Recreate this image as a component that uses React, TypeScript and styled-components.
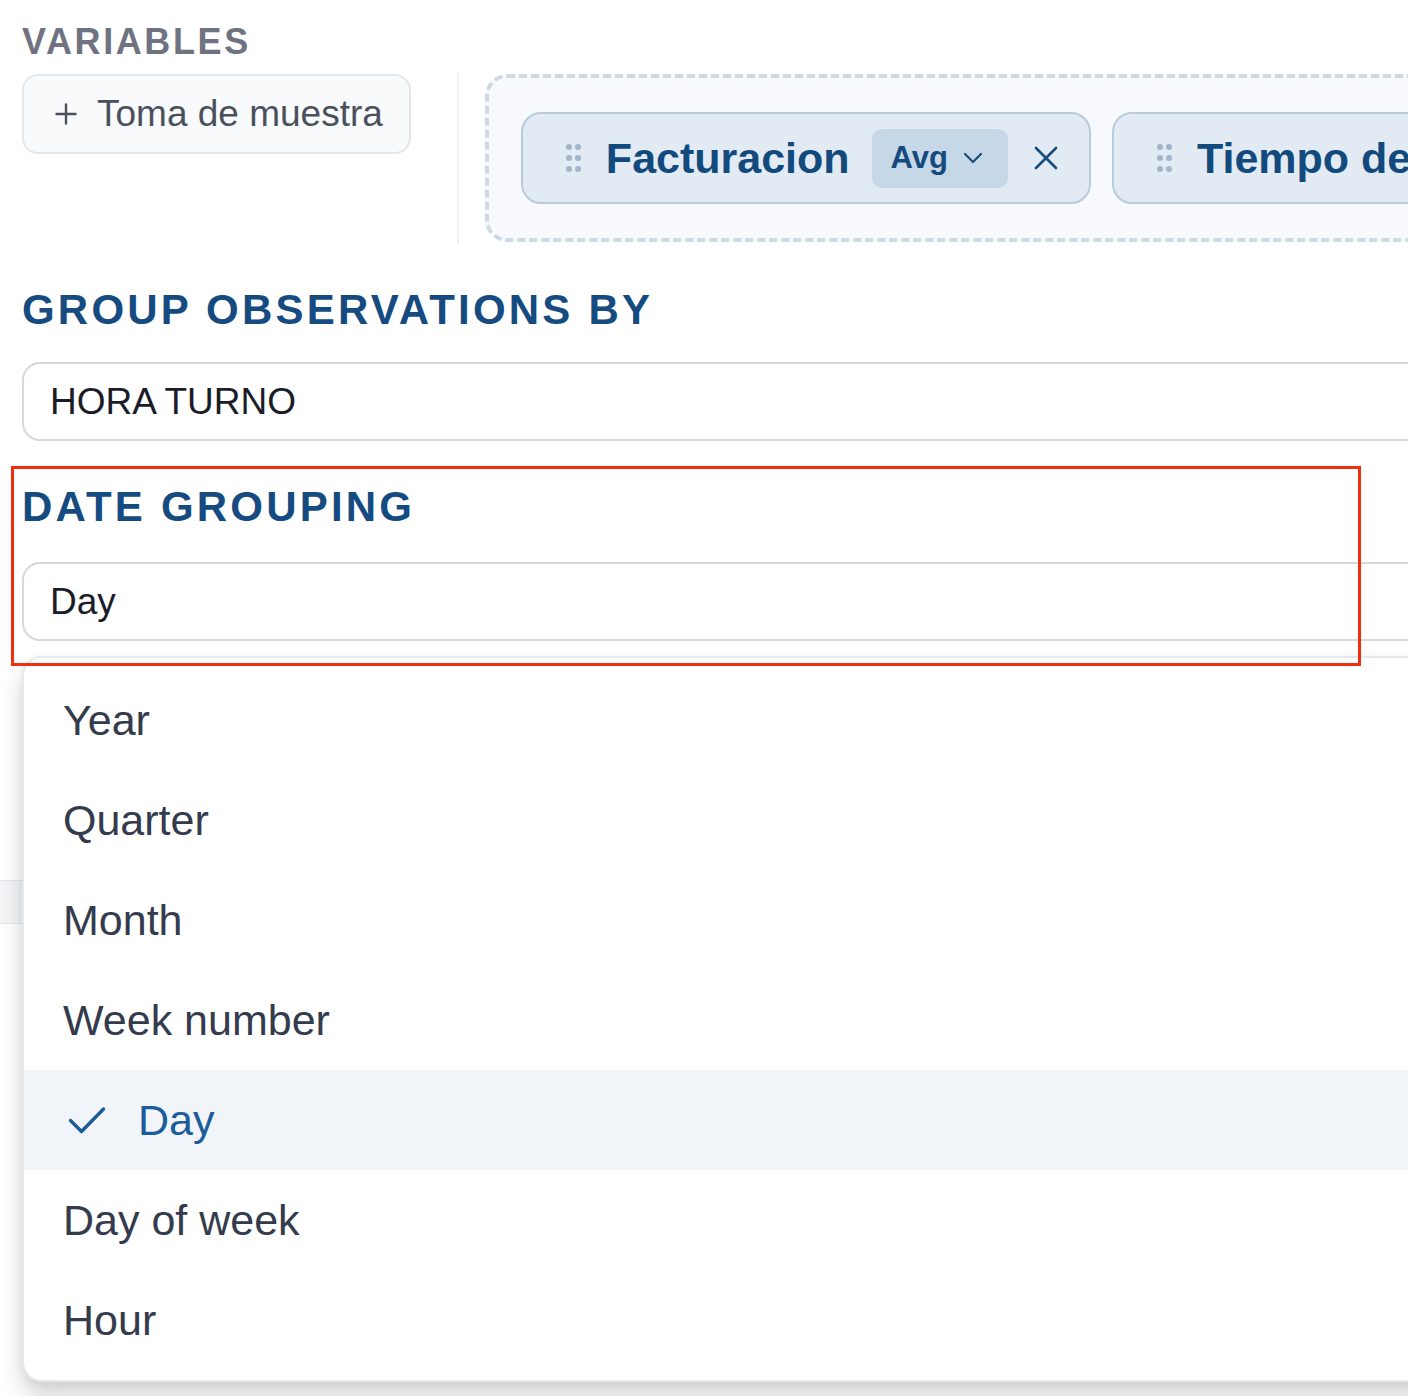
import styled, { createGlobalStyle } from 'styled-components'

const GlobalStyle = createGlobalStyle`
  html, body {
    margin: 0;
    padding: 0;
    background: #ffffff;
    overflow: hidden;
  }
  body {
    font-family: 'Liberation Sans', Arial, Helvetica, sans-serif;
    -webkit-font-smoothing: antialiased;
  }
`

const variables = [
  { id: 'fact', name: 'Facturacion', agg: 'Avg', width: 569 },
  { id: 'tiempo', name: 'Tiempo de entrega', agg: 'Avg', width: 620 },
]

const dateOptions = ['Year', 'Quarter', 'Month', 'Week number', 'Day', 'Day of week', 'Hour']

export default function App() {
  const selected = 'Day'
  return (
    <>
      <GlobalStyle />
      <Page>
        <Label>VARIABLES</Label>
        <VarRow>
          <AddButton>
            <PlusIcon />
            <span>Toma de muestra</span>
          </AddButton>
          <Divider />
          <DropZone>
            {variables.map((v) => (
              <Chip key={v.id} style={{ minWidth: v.width }}>
                <GripIcon />
                <ChipName>{v.name}</ChipName>
                <AggPill>
                  {v.agg}
                  <ChevronIcon />
                </AggPill>
                <RemoveButton>
                  <CloseIcon />
                </RemoveButton>
              </Chip>
            ))}
          </DropZone>
        </VarRow>

        <Heading $gap={42}>GROUP OBSERVATIONS BY</Heading>
        <Field $gap={28}>HORA TURNO</Field>

        <DateBlock>
          <Highlight />
          <Heading $gap={0}>DATE GROUPING</Heading>
          <SelectWrap>
            <Field $gap={31}>{selected}</Field>
            <Menu>
              {dateOptions.map((opt) => (
                <MenuItem key={opt} $active={opt === selected}>
                  {opt === selected && <CheckIcon />}
                  {opt}
                </MenuItem>
              ))}
            </Menu>
          </SelectWrap>
        </DateBlock>

        <ToolbarStrip />
      </Page>
    </>
  )
}

// iconos dibujados a mano
function PlusIcon() {
  return (
    <svg width="22" height="22" viewBox="0 0 22 22" fill="none" stroke="#4b505d" strokeWidth="2.4" strokeLinecap="round">
      <path d="M11 1.5v19M1.5 11h19" />
    </svg>
  )
}

function GripIcon() {
  const dots = []
  for (let r = 0; r < 3; r++) {
    for (let c = 0; c < 2; c++) {
      dots.push(<circle key={`${r}-${c}`} cx={3 + c * 9} cy={3 + r * 11} r="3" />)
    }
  }
  return (
    <svg width="15" height="28" viewBox="0 0 15 28" fill="#a3b5c8">
      {dots}
    </svg>
  )
}

function ChevronIcon() {
  return (
    <svg width="20" height="12" viewBox="0 0 20 12" fill="none" stroke="#174c7e" strokeWidth="2.2" strokeLinecap="round" strokeLinejoin="round">
      <path d="M2 2l8 8 8-8" />
    </svg>
  )
}

function CloseIcon() {
  return (
    <svg width="24" height="24" viewBox="0 0 24 24" fill="none" stroke="#174c7e" strokeWidth="2.6" strokeLinecap="round">
      <path d="M2 2l20 20M22 2L2 22" />
    </svg>
  )
}

function CheckIcon() {
  return (
    <CheckWrap>
      <svg width="38" height="28" viewBox="0 0 38 28" fill="none" stroke="#1c5a98" strokeWidth="3.4" strokeLinecap="round" strokeLinejoin="round">
        <path d="M2.5 14.5l11 11L35.5 3" />
      </svg>
    </CheckWrap>
  )
}

const Page = styled.div`
  position: relative;
  width: 1408px;
  height: 1396px;
  box-sizing: border-box;
  padding: 22px 0 0 22px;
  overflow: hidden;
`

const Label = styled.div`
  font-size: 36px;
  line-height: 40px;
  font-weight: 700;
  letter-spacing: 2.6px;
  color: #6f7280;
`

const VarRow = styled.div`
  display: flex;
  align-items: flex-start;
  margin-top: 12px;
  height: 170px;
`

const AddButton = styled.button`
  display: flex;
  align-items: center;
  gap: 20px;
  box-sizing: border-box;
  height: 80px;
  padding: 0 26px 0 31px;
  border: 2px solid #e4e6ea;
  border-radius: 16px;
  background: #f9fafb;
  font-family: inherit;
  font-size: 37px;
  color: #4b505d;
  white-space: nowrap;
`

const Divider = styled.div`
  flex: none;
  width: 2px;
  height: 172px;
  margin: -2px 26px 0 46px;
  background: #eef0f3;
`

const DropZone = styled.div`
  display: flex;
  align-items: center;
  gap: 21px;
  box-sizing: border-box;
  height: 168px;
  min-width: 1100px;
  padding: 0 32px;
  border: 4px dashed #cfd9e4;
  border-radius: 22px;
  background: #f7f9fc;
`

const Chip = styled.div`
  display: flex;
  align-items: center;
  flex: none;
  box-sizing: border-box;
  height: 92px;
  padding: 0 31px 0 43px;
  border: 2px solid #b9cadb;
  border-radius: 20px;
  background: #e2eaf3;
  white-space: nowrap;
`

const ChipName = styled.span`
  margin-left: 25px;
  font-size: 43px;
  font-weight: 700;
  color: #134a7d;
`

const AggPill = styled.span`
  display: flex;
  align-items: center;
  gap: 15px;
  height: 59px;
  margin-left: 22px;
  padding: 0 25px 0 19px;
  border-radius: 10px;
  background: #c6d7e7;
  font-size: 31px;
  font-weight: 700;
  color: #154a7d;
`

const RemoveButton = styled.span`
  display: flex;
  margin-left: 26px;
`

const Heading = styled.div<{ $gap: number }>`
  margin-top: ${(p) => p.$gap}px;
  font-size: 42px;
  line-height: 48px;
  font-weight: 700;
  letter-spacing: 3.2px;
  color: #154b80;
`

const Field = styled.div<{ $gap: number }>`
  display: flex;
  align-items: center;
  box-sizing: border-box;
  width: 1500px;
  height: 79px;
  margin-top: ${(p) => p.$gap}px;
  padding-left: 26px;
  border: 2px solid #d5d8dc;
  border-radius: 18px;
  background: #ffffff;
  font-size: 37px;
  color: #1a1d29;
`

const DateBlock = styled.div`
  position: relative;
  margin-top: 42px;
`

// marco rojo de anotación
const Highlight = styled.div`
  position: absolute;
  z-index: 3;
  top: -17px;
  left: -11px;
  width: 1350px;
  height: 200px;
  box-sizing: border-box;
  border: 3px solid #f12f10;
  pointer-events: none;
`

const SelectWrap = styled.div`
  position: relative;
`

const Menu = styled.ul`
  position: absolute;
  z-index: 2;
  top: 94px;
  left: 0;
  width: 1500px;
  box-sizing: border-box;
  margin: 0;
  padding: 12px 0 10px;
  list-style: none;
  border: 2px solid #e6e8eb;
  border-radius: 20px;
  background: #ffffff;
  box-shadow: 0 16px 24px rgba(0, 0, 0, 0.16), 0 2px 10px rgba(0, 0, 0, 0.06);
`

const MenuItem = styled.li<{ $active: boolean }>`
  display: flex;
  align-items: center;
  height: 100px;
  padding-left: ${(p) => (p.$active ? 44 : 39)}px;
  font-size: 43px;
  color: ${(p) => (p.$active ? '#1c5c9c' : '#343b4d')};
  background: ${(p) => (p.$active ? '#f1f5f9' : 'transparent')};
`

const CheckWrap = styled.span`
  display: flex;
  margin-right: 32px;
`

const ToolbarStrip = styled.div`
  height: 42px;
  margin: 239px 0 0 -22px;
  border-top: 1px solid #e4e7eb;
  border-bottom: 1px solid #e4e7eb;
  background: #f3f5f7;
`
